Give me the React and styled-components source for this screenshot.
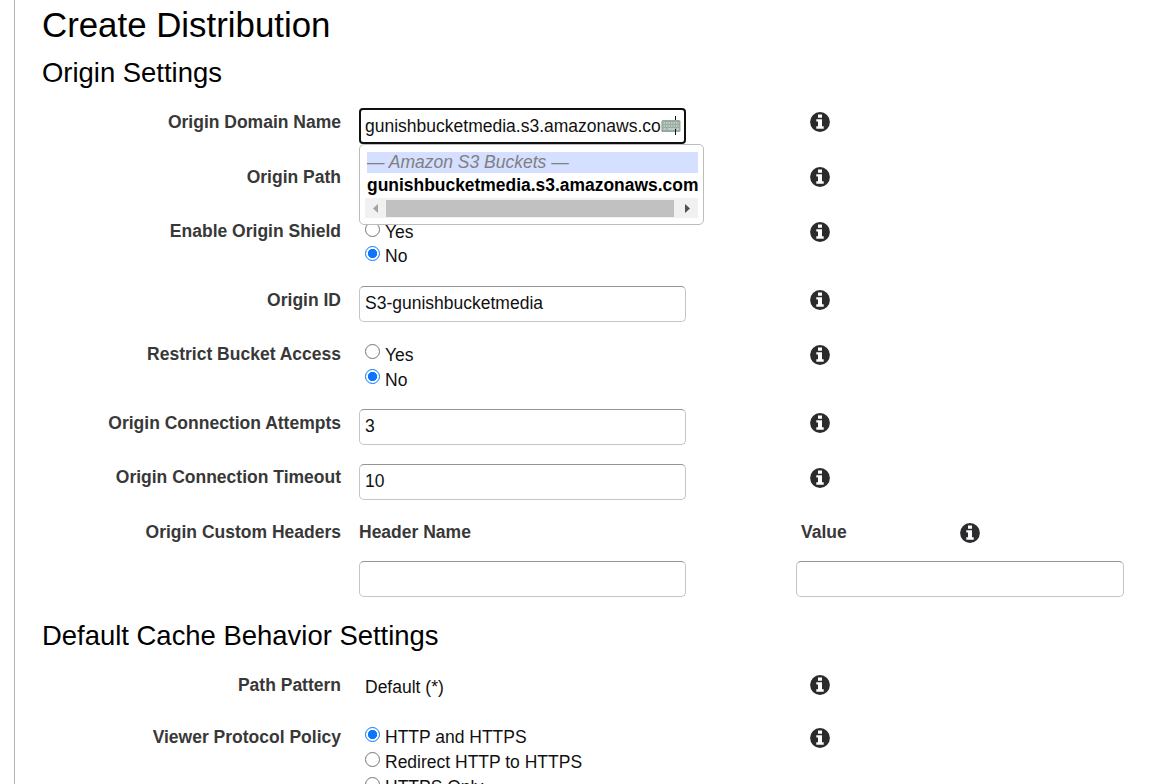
import React from "react";
import styled, { createGlobalStyle, css } from "styled-components";

const Global = createGlobalStyle`
  * { box-sizing: border-box; }
  html, body { margin: 0; background: #fff; overflow: hidden; }
  body { font-family: "Liberation Sans", Arial, sans-serif; font-size: 17.5px; color: #111; }
`;

const Page = styled.main`
  height: 784px;
  margin-left: 14px;
  padding-left: 27px;
  border-left: 1px solid #b4b4b4;
  overflow: hidden;
`;

const Title = styled.h1`
  margin: 0;
  padding-top: 5px;
  height: 53px;
  font-size: 34.85px;
  line-height: 40px;
  font-weight: 400;
  color: #000;
  white-space: nowrap;
`;

const SectionTitle = styled.h2`
  margin: 0;
  height: ${(p) => p.$height}px;
  font-size: 27.45px;
  line-height: 40px;
  font-weight: 400;
  color: #000;
  white-space: nowrap;
`;

const Row = styled.div`
  display: grid;
  grid-template-columns: 299px 327px 420px;
  column-gap: 18px;
  height: ${(p) => p.$height}px;
`;

const Label = styled.div`
  padding-top: ${(p) => (p.$raised ? 3 : 4)}px;
  line-height: 20px;
  font-weight: 700;
  color: #383838;
  text-align: ${(p) => (p.$left ? "left" : "right")};
  white-space: nowrap;
`;

const Aside = styled.div`
  display: flex;
  align-items: flex-start;
  margin-left: 92px;
`;

const InfoSlot = styled.div`
  padding: ${(p) => p.$top || 4}px 0 0 14px;
  line-height: 0;
`;

const ValueLabel = styled(Label)`
  width: 150px;
  padding-left: 5px;
`;

const Field = styled.div`
  position: relative;
`;

const inputBorder = css`
  border: 1px solid #c4c4c4;
  border-top-color: #949494;
`;

const Input = styled.input`
  display: block;
  width: ${(p) => p.$width || 327}px;
  height: 36px;
  padding: 0 5px 1px;
  ${inputBorder}
  border-radius: 5px;
  outline: none;
  background: #fff;
  font: inherit;
  color: #111;
`;

const FocusedInput = styled.div`
  display: flex;
  align-items: center;
  width: 327px;
  height: 36px;
  padding-left: 4px;
  border: 2px solid #101010;
  border-radius: 4px;
  white-space: nowrap;
`;

const KeyboardBadge = styled.svg`
  position: absolute;
  left: 302px;
  top: 7px;
`;

const Menu = styled.div`
  position: absolute;
  z-index: 2;
  left: 0;
  top: 36px;
  width: 345px;
  height: 81px;
  padding: 7px 5px 0;
  border: 1px solid #bcbcbc;
  border-radius: 5px;
  background: #fff;
`;

const MenuHeading = styled.div`
  height: 21px;
  margin-left: 2px;
  line-height: 20px;
  font-style: italic;
  color: #808080;
  background: #d5dfff;
  white-space: nowrap;
`;

const MenuItem = styled.div`
  height: 25px;
  margin-left: 2px;
  line-height: 24px;
  font-size: 17.45px;
  font-weight: 700;
  color: #000;
  white-space: nowrap;
`;

const ScrollBar = styled.div`
  display: flex;
  align-items: center;
  height: 20px;
  padding-left: 8px;
  background: #f1f1f1;
`;

const Thumb = styled.div`
  width: 288px;
  height: 17px;
  margin: 0 11px 0 8px;
  background: #c1c1c1;
`;

const Radios = styled.div`
  padding: ${(p) => p.$top}px 0 0 6px;
`;

const RadioRow = styled.label`
  display: flex;
  align-items: flex-start;
  gap: 5px;
  height: ${(p) => p.$pitch}px;
  line-height: ${(p) => p.$line}px;
  white-space: nowrap;
`;

const RadioDot = styled.span`
  width: 15px;
  height: 15px;
  margin-top: 3px;
  border: 1px solid ${(p) => (p.$on ? "#0b75ff" : "#767676")};
  border-radius: 50%;
  background: ${(p) => (p.$on ? "radial-gradient(circle, #0b75ff 4.3px, #fff 5px)" : "#fff")};
`;

const Static = styled.div`
  padding: 6px 0 0 6px;
  line-height: 20px;
`;

function Info() {
  return (
    <svg width="20" height="20" viewBox="0 0 20 20" role="img" aria-label="Info">
      <circle cx="10" cy="10" r="9.9" fill="#2b2b2d" />
      <path fill="#fff" d="M8 2.5h4v3.2H8zM6.3 7.2H12v7h1.7v2.6H6.3v-2.6H8V9.6H6.3z" />
    </svg>
  );
}

function Arrow({ right }) {
  return (
    <svg width="5" height="9" viewBox="0 0 5 9">
      <path d={right ? "M0 0L5 4.5L0 9z" : "M5 0L0 4.5L5 9z"} fill={right ? "#505050" : "#a3a3a3"} />
    </svg>
  );
}

function Keyboard() {
  return (
    <KeyboardBadge width="20" height="22" viewBox="0 0 20 22">
      <rect x="0.5" y="5" width="19" height="12" rx="1.5" fill="#97aba1" />
      <path d="M2.5 8H18M2.5 11H18" stroke="#cbd8d0" strokeWidth="1.3" strokeDasharray="1.5 1" />
      <path d="M2.5 14H5M6.5 14H14M15.5 14H18" stroke="#cbd8d0" strokeWidth="1.3" />
      <path d="M14.5 1V5M14.5 14V20" stroke="#111" strokeWidth="1" />
    </KeyboardBadge>
  );
}

function RadioGroup({ options, selected, top = 0, pitch = 25, line = 27 }) {
  return (
    <Radios $top={top}>
      {options.map((o) => (
        <RadioRow key={o} $pitch={pitch} $line={line}>
          <RadioDot $on={o === selected} />
          {o}
        </RadioRow>
      ))}
    </Radios>
  );
}

function Setting({ label, height, raised, children }) {
  return (
    <Row $height={height}>
      <Label $raised={raised}>{label}</Label>
      <Field>{children}</Field>
      <Aside>
        <InfoSlot><Info /></InfoSlot>
      </Aside>
    </Row>
  );
}

export default function App() {
  return (
    <Page>
      <Global />
      <Title>Create Distribution</Title>
      <SectionTitle $height={55}>Origin Settings</SectionTitle>
      <Setting label="Origin Domain Name" height={55}>
        <FocusedInput>gunishbucketmedia.s3.amazonaws.com</FocusedInput>
        <Keyboard />
        <Menu>
          <MenuHeading>— Amazon S3 Buckets —</MenuHeading>
          <MenuItem>gunishbucketmedia.s3.amazonaws.com</MenuItem>
          <ScrollBar>
            <Arrow />
            <Thumb />
            <Arrow right />
          </ScrollBar>
        </Menu>
      </Setting>
      <Setting label="Origin Path" height={55} />
      <Setting label="Enable Origin Shield" height={68} raised>
        <RadioGroup options={["Yes", "No"]} selected="No" top={1} pitch={24} />
      </Setting>
      <Setting label="Origin ID" height={55}>
        <Input defaultValue="S3-gunishbucketmedia" />
      </Setting>
      <Setting label="Restrict Bucket Access" height={68} raised>
        <RadioGroup options={["Yes", "No"]} selected="No" pitch={24.5} line={28.8} />
      </Setting>
      <Setting label="Origin Connection Attempts" height={55}>
        <Input defaultValue="3" />
      </Setting>
      <Setting label="Origin Connection Timeout" height={54} raised>
        <Input defaultValue="10" />
      </Setting>
      <Row $height={43}>
        <Label>Origin Custom Headers</Label>
        <Label $left>Header Name</Label>
        <Aside>
          <ValueLabel $left>Value</ValueLabel>
          <InfoSlot $top={5}><Info /></InfoSlot>
        </Aside>
      </Row>
      <Row $height={55}>
        <span />
        <Input />
        <Aside><Input $width={328} /></Aside>
      </Row>
      <SectionTitle $height={55}>Default Cache Behavior Settings</SectionTitle>
      <Setting label="Path Pattern" height={53}>
        <Static>Default (*)</Static>
      </Setting>
      <Setting label="Viewer Protocol Policy" height={90} raised>
        <RadioGroup
          options={["HTTP and HTTPS", "Redirect HTTP to HTTPS", "HTTPS Only"]}
          selected="HTTP and HTTPS"
        />
      </Setting>
    </Page>
  );
}
